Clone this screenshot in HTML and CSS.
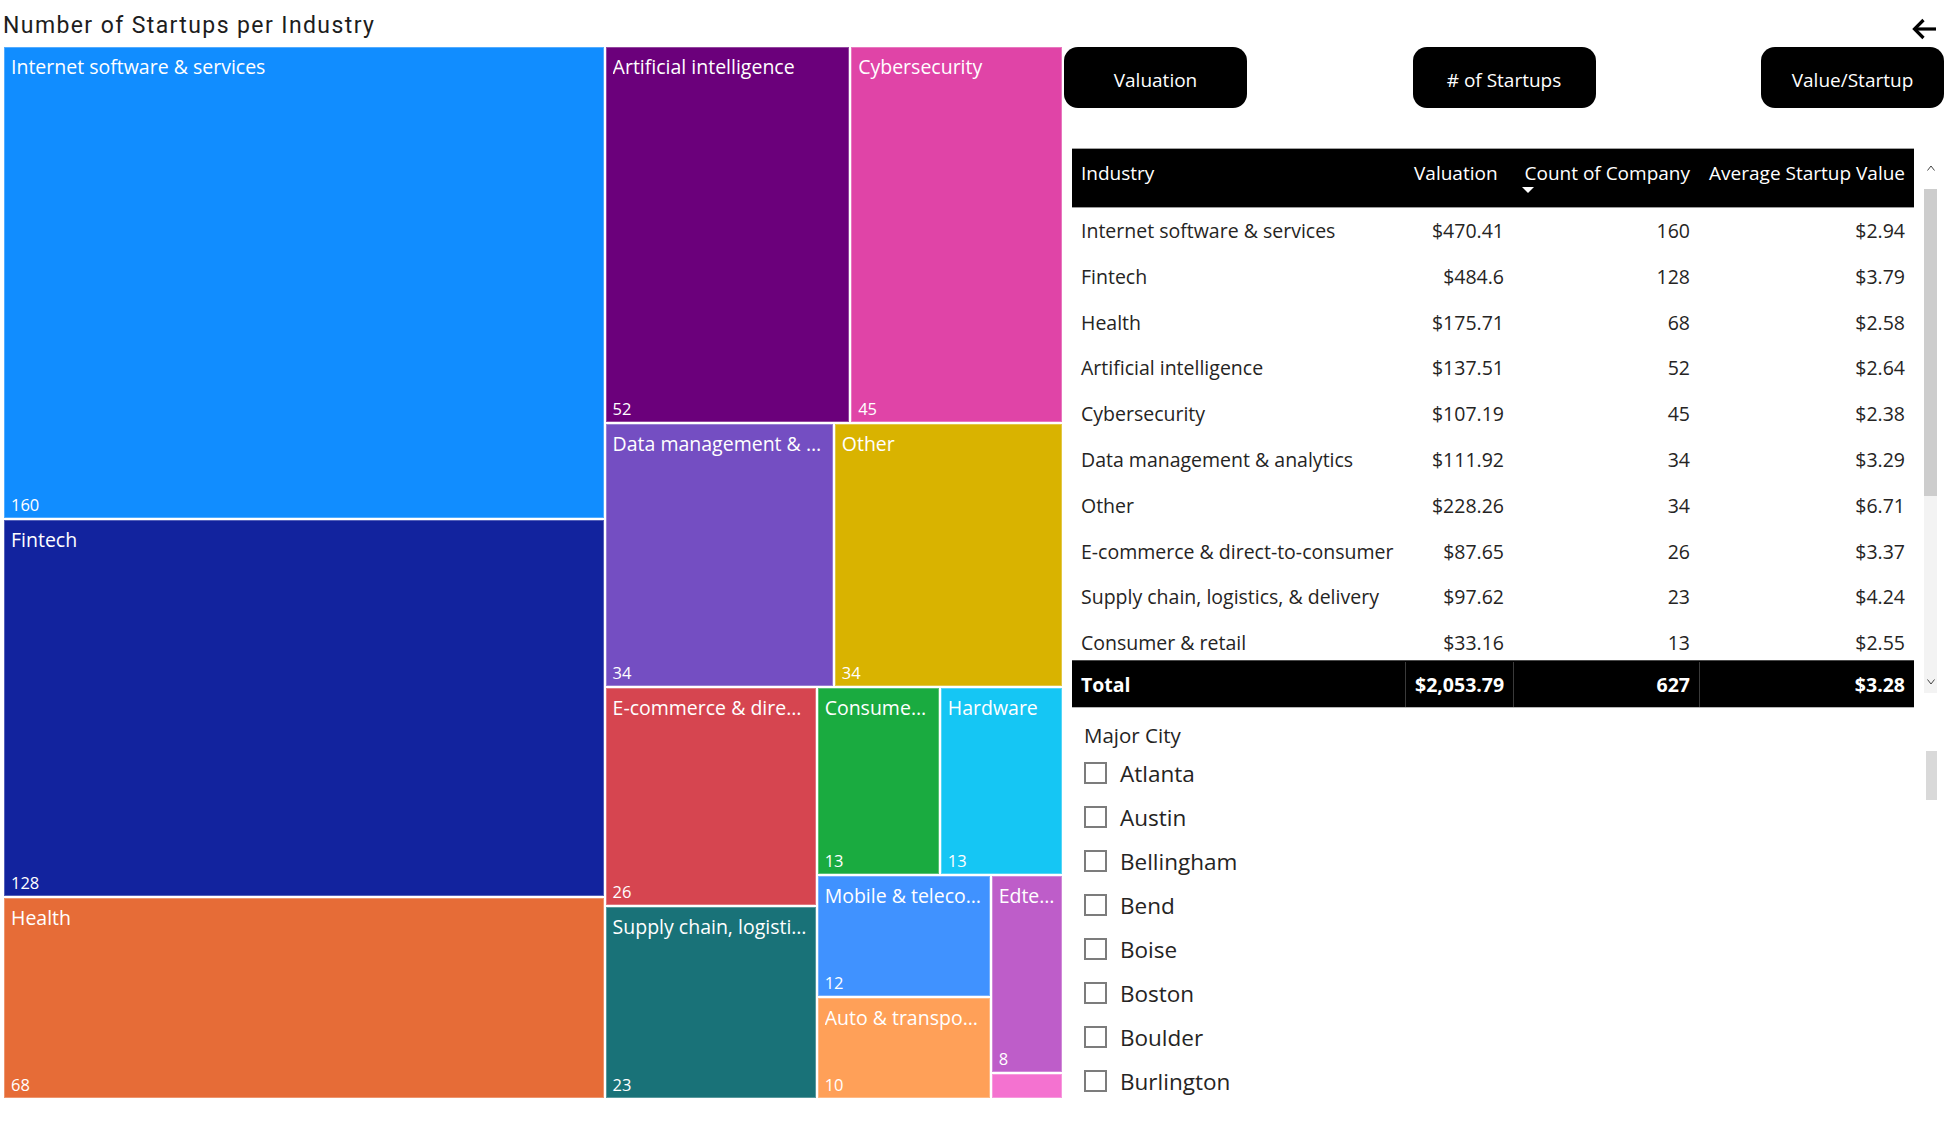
FILE: index.html
```html
<!DOCTYPE html>
<html lang="en">
<head>
<meta charset="utf-8">
<title>Number of Startups per Industry</title>
<link rel="stylesheet" href="styles.css">
</head>
<body>
<div class="page">
  <section class="left">
    <h1 class="title">Number of Startups per Industry</h1>
    <div class="treemap">
      <div class="col" style="flex-grow:356">
        <div class="tile c-internet" style="flex-grow:160"><span class="lbl">Internet software &amp; services</span><span class="val">160</span></div>
        <div class="tile c-fintech" style="flex-grow:128"><span class="lbl">Fintech</span><span class="val">128</span></div>
        <div class="tile c-health" style="flex-grow:68"><span class="lbl">Health</span><span class="val">68</span></div>
      </div>
      <div class="col" style="flex-grow:271">
        <div class="row" style="flex-grow:97">
          <div class="tile c-ai" style="flex-grow:52"><span class="lbl">Artificial intelligence</span><span class="val">52</span></div>
          <div class="tile c-cyber" style="flex-grow:45"><span class="lbl">Cybersecurity</span><span class="val">45</span></div>
        </div>
        <div class="row" style="flex-grow:68">
          <div class="tile c-data" style="flex-grow:34"><span class="lbl">Data management &amp; analytics</span><span class="val">34</span></div>
          <div class="tile c-other" style="flex-grow:34"><span class="lbl">Other</span><span class="val">34</span></div>
        </div>
        <div class="row" style="flex-grow:106">
          <div class="col" style="flex-grow:49">
            <div class="tile c-ecom" style="flex-grow:26"><span class="lbl">E-commerce &amp; direct-to-consumer</span><span class="val">26</span></div>
            <div class="tile c-supply" style="flex-grow:23"><span class="lbl">Supply chain, logistics, &amp; delivery</span><span class="val">23</span></div>
          </div>
          <div class="col" style="flex-grow:57">
            <div class="row" style="flex-grow:26">
              <div class="tile c-consumer" style="flex-grow:13"><span class="lbl">Consumer &amp; retail</span><span class="val">13</span></div>
              <div class="tile c-hardware" style="flex-grow:13"><span class="lbl">Hardware</span><span class="val">13</span></div>
            </div>
            <div class="row" style="flex-grow:31">
              <div class="col" style="flex-grow:22">
                <div class="tile c-mobile" style="flex-grow:12"><span class="lbl">Mobile &amp; telecommunications</span><span class="val">12</span></div>
                <div class="tile c-auto" style="flex-grow:10"><span class="lbl">Auto &amp; transportation</span><span class="val">10</span></div>
              </div>
              <div class="col" style="flex-grow:9">
                <div class="tile c-edtech" style="flex-grow:8"><span class="lbl">Edtech</span><span class="val">8</span></div>
                <div class="tile c-travel" style="flex-grow:1"></div>
              </div>
            </div>
          </div>
        </div>
      </div>
    </div>
  </section>

  <section class="right">
    <div class="topbar">
      <svg class="back" viewBox="0 0 26 22" aria-label="Back">
        <path d="M25 11H4" stroke="#000" stroke-width="3.2" fill="none"/>
        <path d="M12.5 2L3.5 11L12.5 20" stroke="#000" stroke-width="3.2" fill="none" stroke-linejoin="miter"/>
      </svg>
    </div>
    <div class="buttons">
      <div class="btn">Valuation</div>
      <div class="btn"># of Startups</div>
      <div class="btn">Value/Startup</div>
    </div>

    <div class="table-area">
      <div class="table">
        <div class="thead">
          <div class="cell">Industry</div>
          <div class="cell num val-h">Valuation</div>
          <div class="cell num sorted">Count of Company<span class="sort"></span></div>
          <div class="cell num">Average Startup Value</div>
        </div>
        <div class="tbody">
          <div class="trow"><div class="cell">Internet software &amp; services</div><div class="cell num">$470.41</div><div class="cell num">160</div><div class="cell num">$2.94</div></div>
          <div class="trow"><div class="cell">Fintech</div><div class="cell num">$484.6</div><div class="cell num">128</div><div class="cell num">$3.79</div></div>
          <div class="trow"><div class="cell">Health</div><div class="cell num">$175.71</div><div class="cell num">68</div><div class="cell num">$2.58</div></div>
          <div class="trow"><div class="cell">Artificial intelligence</div><div class="cell num">$137.51</div><div class="cell num">52</div><div class="cell num">$2.64</div></div>
          <div class="trow"><div class="cell">Cybersecurity</div><div class="cell num">$107.19</div><div class="cell num">45</div><div class="cell num">$2.38</div></div>
          <div class="trow"><div class="cell">Data management &amp; analytics</div><div class="cell num">$111.92</div><div class="cell num">34</div><div class="cell num">$3.29</div></div>
          <div class="trow"><div class="cell">Other</div><div class="cell num">$228.26</div><div class="cell num">34</div><div class="cell num">$6.71</div></div>
          <div class="trow"><div class="cell">E-commerce &amp; direct-to-consumer</div><div class="cell num">$87.65</div><div class="cell num">26</div><div class="cell num">$3.37</div></div>
          <div class="trow"><div class="cell">Supply chain, logistics, &amp; delivery</div><div class="cell num">$97.62</div><div class="cell num">23</div><div class="cell num">$4.24</div></div>
          <div class="trow"><div class="cell">Consumer &amp; retail</div><div class="cell num">$33.16</div><div class="cell num">13</div><div class="cell num">$2.55</div></div>
        </div>
        <div class="tfoot">
          <div class="cell">Total</div>
          <div class="cell num">$2,053.79</div>
          <div class="cell num">627</div>
          <div class="cell num">$3.28</div>
        </div>
      </div>
      <div class="vscroll">
        <div class="arrow-up"><svg viewBox="0 0 8 6"><polyline points="0.5,5.5 4,1 7.5,5.5" fill="none" stroke="#444" stroke-width="1"/></svg></div>
        <div class="track">
          <div class="thumb"></div>
          <svg class="arrow-down" viewBox="0 0 8 6"><polyline points="0.5,0.5 4,5 7.5,0.5" fill="none" stroke="#444" stroke-width="1"/></svg>
        </div>
      </div>
    </div>

    <div class="slicer">
      <div class="slicer-list">
        <div class="slicer-title">Major City</div>
        <div class="city"><span class="box"></span><span>Atlanta</span></div>
        <div class="city"><span class="box"></span><span>Austin</span></div>
        <div class="city"><span class="box"></span><span>Bellingham</span></div>
        <div class="city"><span class="box"></span><span>Bend</span></div>
        <div class="city"><span class="box"></span><span>Boise</span></div>
        <div class="city"><span class="box"></span><span>Boston</span></div>
        <div class="city"><span class="box"></span><span>Boulder</span></div>
        <div class="city"><span class="box"></span><span>Burlington</span></div>
      </div>
      <div class="slicer-scroll"></div>
    </div>
  </section>
</div>
</body>
</html>
```

FILE: styles.css
```css
* { box-sizing: border-box; margin: 0; padding: 0; }

body {
  margin: 0;
  width: 1956px;
  height: 1123px;
  overflow: hidden;
  background: #ffffff;
  font-family: "Open Sans", "Noto Sans", sans-serif;
  color: #252423;
}

.page {
  display: flex;
  height: 1123px;
}

/* ---------- left: treemap ---------- */
.left {
  width: 1062px;
  display: flex;
  flex-direction: column;
}

.title {
  height: 47px;
  padding: 12px 0 0 3px;
  font-family: Roboto, "Liberation Sans", sans-serif;
  font-weight: 400;
  font-size: 23px;
  line-height: 28px;
  letter-spacing: 1.4px;
  color: #1d1d1d;
}

.treemap {
  margin-left: 4px;
  width: 1058px;
  height: 1051px;
  display: flex;
  gap: 2px;
}

.col {
  display: flex;
  flex-direction: column;
  gap: 2px;
  flex-basis: 0;
  min-width: 0;
  min-height: 0;
}

.row {
  display: flex;
  gap: 2px;
  flex-basis: 0;
  min-width: 0;
  min-height: 0;
}

.tile {
  flex-basis: 0;
  min-width: 0;
  min-height: 0;
  overflow: hidden;
  display: flex;
  flex-direction: column;
  justify-content: space-between;
  color: #ffffff;
  box-shadow: inset 0 0 0 1px rgba(255, 255, 255, 0.28);
}

.lbl {
  display: block;
  margin: 6px 7px 0 7px;
  font-size: 19.5px;
  line-height: 28px;
  white-space: nowrap;
  overflow: hidden;
  text-overflow: ellipsis;
}

.val {
  display: block;
  margin: 0 7px 1px 7px;
  font-size: 16.5px;
  line-height: 24px;
  white-space: nowrap;
}

.c-internet { background: #118dff; }
.c-fintech  { background: #12239e; }
.c-health   { background: #e66c37; }
.c-ai       { background: #6b007b; }
.c-cyber    { background: #e044a7; }
.c-data     { background: #744ec2; }
.c-other    { background: #d9b300; }
.c-ecom     { background: #d64550; }
.c-supply   { background: #197278; }
.c-consumer { background: #1aab40; }
.c-hardware { background: #15c6f4; }
.c-mobile   { background: #4092ff; }
.c-auto     { background: #ffa058; }
.c-edtech   { background: #be5dc9; }
.c-travel   { background: #f472d0; }

/* ---------- right panel ---------- */
.right {
  flex: 1;
  padding: 0 12px 0 2px;
  display: flex;
  flex-direction: column;
}

.topbar {
  height: 47px;
  display: flex;
  justify-content: flex-end;
  align-items: flex-start;
  padding: 18px 7px 0 0;
}

.back {
  width: 26px;
  height: 22px;
  display: block;
}

.buttons {
  display: flex;
  justify-content: space-between;
  height: 61px;
}

.btn {
  width: 183px;
  height: 61px;
  padding-top: 5px;
  background: #000000;
  color: #ffffff;
  border-radius: 14px;
  font-size: 19px;
  line-height: 56px;
  text-align: center;
}

/* ---------- table ---------- */
.table-area {
  margin-top: 40px;
  padding-left: 8px;
  display: flex;
}

.table {
  width: 842px;
  font-size: 19.5px;
}

.thead,
.trow,
.tfoot {
  display: grid;
  grid-template-columns: 333px 108px 186px 215px;
}

.cell {
  padding: 0 9px;
  white-space: nowrap;
  position: relative;
}

.num { text-align: right; }

.thead {
  height: 60px;
  background: #000000;
  color: #ffffff;
  font-size: 19px;
  border-top: 1px solid #a0a0a0;
  border-bottom: 1px solid #9a9a9a;
}

.thead .cell {
  padding-top: 11px;
  line-height: 27px;
}

.thead .val-h { padding-right: 19px; }

.sort {
  position: absolute;
  left: 9px;
  top: 38px;
  width: 0;
  height: 0;
  border-left: 6.5px solid transparent;
  border-right: 6.5px solid transparent;
  border-top: 6px solid #ffffff;
}

.tbody {
  height: 452px;
  overflow: hidden;
}

.trow {
  height: 45.8px;
  line-height: 45.8px;
  color: #252423;
}

.tfoot {
  height: 48px;
  padding-top: 1px;
  background: #000000;
  color: #ffffff;
  font-weight: 700;
  line-height: 45px;
  border-top: 1px solid #4a4a4a;
  border-bottom: 1px solid #b5b5b5;
}

.tfoot .cell + .cell { border-left: 1px solid #3a3a3a; }

.vscroll {
  width: 13px;
  margin-left: 10px;
  height: 560px;
  display: flex;
  flex-direction: column;
}

.arrow-up {
  height: 41px;
  padding: 17px 2px 0 3px;
}

.arrow-up svg,
.arrow-down {
  display: block;
  width: 8px;
  height: 6px;
}

.track {
  position: relative;
  height: 504px;
  background: #f3f3f3;
}

.thumb {
  height: 307px;
  background: #cdcdcd;
}

.arrow-down {
  position: absolute;
  left: 3px;
  bottom: 8px;
}

/* ---------- slicer ---------- */
.slicer {
  margin-top: 14px;
  padding-left: 20px;
  display: flex;
}

.slicer-list { flex: 1; }

.slicer-title {
  font-size: 20.5px;
  line-height: 26px;
  margin-bottom: 3px;
  color: #252423;
}

.city {
  height: 44px;
  display: flex;
  align-items: center;
  gap: 13px;
  font-size: 22.5px;
  color: #252423;
}

.box {
  width: 23px;
  height: 22px;
  border: 2px solid #7c7c7c;
  background: #ffffff;
}

.slicer-scroll {
  width: 11px;
  height: 49px;
  margin-top: 29px;
  margin-right: 7px;
  background: #d9d9d9;
}
```
